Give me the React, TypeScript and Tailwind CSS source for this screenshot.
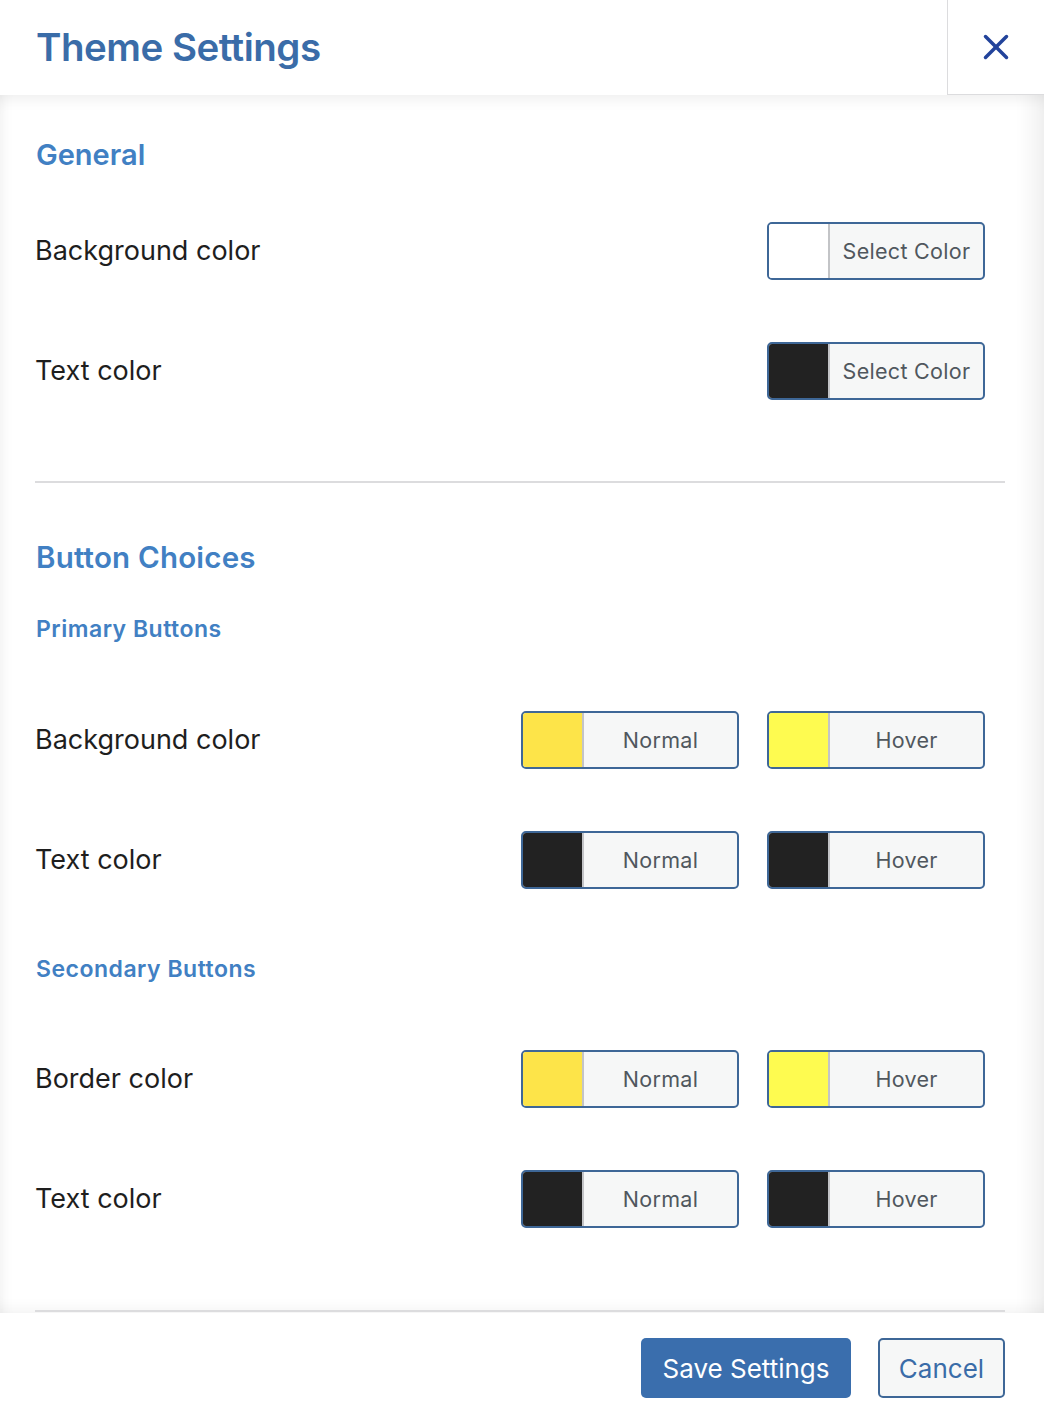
import { X } from 'lucide-react';

/* ─── Colour control ──────────────────────────────────────────── */

function ColorButton({ swatch, label }: { swatch: string; label: string }) {
  return (
    <button
      type="button"
      className="flex h-[58px] w-[218px] overflow-hidden rounded-[5px] border-2 border-[#3e6797] bg-[#f6f7f7]"
    >
      <span className="h-full w-[61px] shrink-0 border-r-2 border-[#c3c4c7]" style={{ backgroundColor: swatch }} />
      <span className="flex flex-1 items-center justify-center text-[21.5px] tracking-[0.3px] text-[#50575e]">
        {label}
      </span>
    </button>
  );
}

function Row({ label, children }: { label: string; children: React.ReactNode }) {
  return (
    <div className="flex h-[120px] items-center justify-between pr-5">
      <span className="text-[27px] text-[#1e1e1e]">{label}</span>
      <div className="flex gap-[28px]">{children}</div>
    </div>
  );
}

const YELLOW = '#fde449';
const YELLOW_HOVER = '#fefb50';
const DARK = '#222222';

/* ─── Page ────────────────────────────────────────────────────── */

export default function App() {
  return (
    <div className="flex h-[1416px] w-[1044px] flex-col overflow-hidden bg-white font-['Inter',sans-serif]">
      {/* Header */}
      <header className="relative z-10 flex h-[95px] shrink-0 items-center justify-between bg-white">
        <h1 className="pl-[36px] text-[38.5px] font-semibold tracking-[-0.5px] text-[#3a6ca8]">Theme Settings</h1>
        <button
          type="button"
          className="flex h-[95px] w-[97px] items-center justify-center border-b border-l border-[#dcdcde] bg-white text-[#22439b]"
        >
          <X className="h-[42px] w-[42px]" strokeWidth={2} />
        </button>
      </header>

      {/* Body */}
      <main className="flex-1 overflow-hidden pl-[35px] pr-[39px] shadow-[inset_0_12px_14px_-8px_rgba(0,0,0,0.07),inset_14px_0_14px_-12px_rgba(0,0,0,0.06),inset_-30px_0_22px_-20px_rgba(0,0,0,0.07),inset_0_-14px_14px_-10px_rgba(0,0,0,0.05)]">
        <section className="border-b-2 border-[#dcdcde] pb-[50px] pt-[42px]">
          <h2 className="pl-px text-[29px] font-semibold leading-[36px] text-[#4180c3]">General</h2>
          <div className="mt-[18px]">
            <Row label="Background color">
              <ColorButton swatch="#ffffff" label="Select Color" />
            </Row>
            <Row label="Text color">
              <ColorButton swatch={DARK} label="Select Color" />
            </Row>
          </div>
        </section>

        <section className="border-b-2 border-[#dcdcde] pb-[51px] pt-[56px]">
          <h2 className="pl-px text-[29.5px] font-semibold leading-[36px] tracking-[0.2px] text-[#4180c3]">
            Button Choices
          </h2>

          <h3 className="mt-[40px] pl-px text-[23px] font-semibold leading-[28px] tracking-[0.5px] text-[#4180c3]">
            Primary Buttons
          </h3>
          <div className="mt-[37px]">
            <Row label="Background color">
              <ColorButton swatch={YELLOW} label="Normal" />
              <ColorButton swatch={YELLOW_HOVER} label="Hover" />
            </Row>
            <Row label="Text color">
              <ColorButton swatch={DARK} label="Normal" />
              <ColorButton swatch={DARK} label="Hover" />
            </Row>
          </div>

          <h3 className="mt-[35px] pl-px text-[23px] font-semibold leading-[28px] tracking-[0.5px] text-[#4180c3]">
            Secondary Buttons
          </h3>
          <div className="mt-[36px]">
            <Row label="Border color">
              <ColorButton swatch={YELLOW} label="Normal" />
              <ColorButton swatch={YELLOW_HOVER} label="Hover" />
            </Row>
            <Row label="Text color">
              <ColorButton swatch={DARK} label="Normal" />
              <ColorButton swatch={DARK} label="Hover" />
            </Row>
          </div>
        </section>
      </main>

      {/* Footer */}
      <footer className="flex h-[103px] shrink-0 items-start justify-end gap-[27px] bg-white pr-[39px] pt-[25px]">
        <button
          type="button"
          className="h-[60px] w-[210px] rounded-[5px] bg-[#3a6ead] text-[26px] text-white"
        >
          Save Settings
        </button>
        <button
          type="button"
          className="h-[60px] w-[127px] rounded-[5px] border-2 border-[#3e6797] bg-[#f6f7f7] text-[26px] text-[#3a6ca8]"
        >
          Cancel
        </button>
      </footer>
    </div>
  );
}
